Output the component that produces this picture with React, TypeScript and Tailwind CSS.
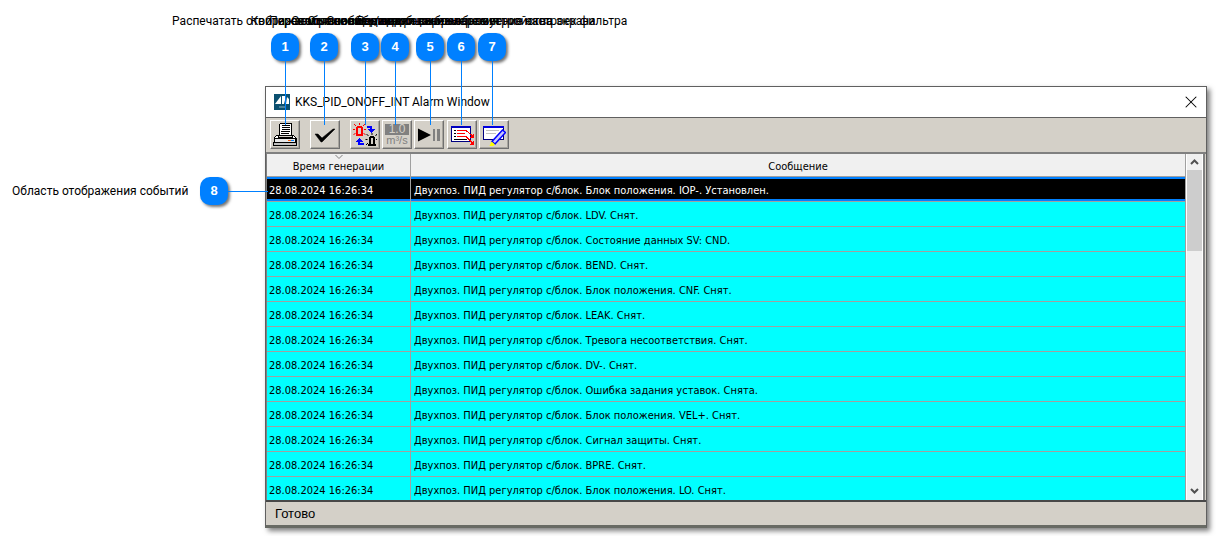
import { useState } from 'react';
import { X } from 'lucide-react';

interface AlarmEvent {
  time: string;
  message: string;
}

const PREFIX = 'Двухпоз. ПИД регулятор с/блок. ';

const EVENTS: AlarmEvent[] = [
  'Блок положения. IOP-. Установлен.',
  'LDV. Снят.',
  'Состояние данных SV: CND.',
  'BEND. Снят.',
  'Блок положения. CNF. Снят.',
  'LEAK. Снят.',
  'Тревога несоответствия. Снят.',
  'DV-. Снят.',
  'Ошибка задания уставок. Снята.',
  'Блок положения. VEL+. Снят.',
  'Сигнал защиты. Снят.',
  'BPRE. Снят.',
  'Блок положения. LO. Снят.',
].map((text) => ({ time: '28.08.2024 16:26:34', message: PREFIX + text }));

// Callouts pinned over the toolbar, one per button
const CALLOUTS = [
  { id: 1, place: 'left-[271px]', label: 'Распечатать отображаемые сообщения' },
  { id: 2, place: 'left-[310px]', label: 'Квитировать все события' },
  { id: 3, place: 'left-[351px]', label: 'Переключение состояния сирены' },
  { id: 4, place: 'left-[381px]', label: 'Отображение в единицах измерения' },
  { id: 5, place: 'left-[416px]', label: 'Остановить/возобновить обновление окна' },
  { id: 6, place: 'left-[447px]', label: 'Сообщения для выбранного устройства экрана' },
  { id: 7, place: 'left-[478px]', label: 'Редактирование параметров настроек фильтра' },
];

const BADGE =
  "flex h-7 w-7 shrink-0 items-center justify-center rounded-[10px] bg-[#0080ff] font-['Liberation_Sans',Arial,sans-serif] text-[13px] font-bold text-white shadow-[2px_2px_3px_rgba(0,0,0,0.55)]";

function PrintIcon() {
  return (
    <svg width="24" height="24" viewBox="0 0 24 24" shapeRendering="crispEdges">
      <path d="M4 12l-3 3v4h22v-4l-3-3h-1v2H5v-2z" fill="#fff" stroke="#000" />
      <path d="M7.500 0.500H18.500V12.500H6.500V2z" fill="#fff" stroke="#000" />
      <path d="M9 2.500h8M9 4.500h8M9 6.500h8M8 8.500h9M8 10.500h8" stroke="#000" />
      <rect x="1.5" y="15.500" width="21" height="4" fill="#e8e8e8" stroke="#000" />
      <rect x="0.5" y="19.500" width="23" height="3" fill="#c0c0c0" stroke="#000" />
      <rect x="15" y="17" width="3" height="1" fill="#ff6000" />
      <rect x="18" y="17" width="3" height="1" fill="#0080ff" />
    </svg>
  );
}

function AckIcon() {
  return (
    <svg width="24" height="24" viewBox="0 0 24 24">
      <path d="M2 11h3l4 4L20 6h2L9 19H8z" fill="#000" stroke="#000" strokeWidth="0.5" />
    </svg>
  );
}

function AlarmSwitchIcon() {
  return (
    <svg width="24" height="24" viewBox="0 0 24 24" fill="none">
      <g shapeRendering="crispEdges">
        <path d="M4 11V5L5 4H8L9 5V11M3 12H10" stroke="#f00" strokeWidth="2" />
        <path d="M17 21V15L18 14H20L21 15V21M15 22H23" stroke="#000" strokeWidth="2" />
      </g>
      <path d="M6.500 0V2M1 1L3 3M12 1L10 3M0 6.500H2M11 6.500H13M0.500 12L2.500 10M12.500 12L10.500 10" stroke="#f00" />
      <path d="M19 10V12M13.500 11L15.500 13M24 11L22.500 13M12.500 16.500H14.500M23 16.500H24M13 22L15 20" stroke="#000" />
      <g shapeRendering="crispEdges">
        <path d="M14 4H18V7" stroke="#00f" strokeWidth="2" />
        <path d="M14 6H22L18 10Z" fill="#00f" />
        <path d="M11 21H6V18" stroke="#00f" strokeWidth="2" />
        <path d="M2 19H10L6 15Z" fill="#00f" />
      </g>
    </svg>
  );
}

function UnitsIcon() {
  return (
    <span className="flex flex-col items-center font-['Liberation_Sans',sans-serif] text-[11px] leading-[11px] text-[#808080]">
      <span className="w-6 bg-[#808080] text-[12px] text-[#d4d0c8]">1.0</span>
      <span>m³/s</span>
    </span>
  );
}

function PauseIcon() {
  return (
    <svg width="24" height="24" viewBox="0 0 24 24">
      <path d="M1 5.500V18.500L14 12Z" fill="#000" />
      <rect x="16" y="6" width="2" height="12" fill="#808080" />
      <rect x="20" y="6" width="3" height="12" fill="#808080" />
    </svg>
  );
}

function ListIcon() {
  return (
    <svg width="24" height="24" viewBox="0 0 24 24" shapeRendering="crispEdges">
      <rect x="1" y="3" width="20" height="16" fill="#000080" />
      <rect x="2" y="5" width="18" height="13" fill="#fff" />
      <rect x="1" y="3" width="20" height="2" fill="#0000c0" />
      <path d="M4 7.500H6M4 10.500H6M4 13.500H6M4 16.500H17" stroke="#000" />
      <path d="M7 7.500H16L22 12.500M7 10.500H15M7 13.500H16L22 19.500" stroke="#f00" fill="none" />
      <path d="M24 10v5h-5zM24 17v5h-5z" fill="#f00" />
    </svg>
  );
}

function EditIcon() {
  return (
    <svg width="24" height="24" viewBox="0 0 24 24">
      <g shapeRendering="crispEdges">
        <rect x="1" y="3" width="21" height="14" fill="#000080" />
        <rect x="2" y="5" width="19" height="11" fill="#fff" />
        <rect x="1" y="3" width="21" height="2" fill="#0000e0" />
        <path d="M4 7.500H17M4 10.500H14" stroke="#c0c0c0" />
      </g>
      <path d="M20.500 7l3 2.500L13 21l-3-2.500z" fill="#c8c8ff" stroke="#00f" strokeWidth="1.5" />
      <path d="M9.500 18.500l3.500 3-2 1.500H7.500z" fill="#ff0" />
    </svg>
  );
}

const TOOLS = [
  { id: 'print', title: 'Распечатать', icon: <PrintIcon />, gap: 'mr-[10px]' },
  { id: 'ack', title: 'Квитировать', icon: <AckIcon />, gap: 'mr-[10px]' },
  { id: 'switch', title: 'Переключить', icon: <AlarmSwitchIcon />, gap: 'mr-0.5' },
  { id: 'units', title: 'Единицы', icon: <UnitsIcon />, gap: 'mr-0.5' },
  { id: 'pause', title: 'Пауза', icon: <PauseIcon />, gap: 'mr-[3px]' },
  { id: 'list', title: 'Список', icon: <ListIcon />, gap: 'mr-0.5' },
  { id: 'edit', title: 'Фильтр', icon: <EditIcon />, gap: '' },
];

function Callouts() {
  return (
    <>
      {CALLOUTS.map((c) => (
        <div key={c.id} className={`absolute top-[13px] z-10 flex w-7 flex-col items-center ${c.place}`}>
          <span className="flex h-4 w-0 justify-center text-[12px] leading-4 whitespace-nowrap">{c.label}</span>
          <span className={`mt-1 ${BADGE}`}>{c.id}</span>
          <span className="ml-px h-16 w-px bg-[#0080ff]" />
        </div>
      ))}
      <div className="absolute top-[177px] left-3 z-10 flex items-center">
        <span className="w-[188px] text-[12px] whitespace-nowrap">Область отображения событий</span>
        <span className={BADGE}>8</span>
        <span className="h-px w-10 bg-[#0080ff]" />
      </div>
    </>
  );
}

function Scrollbar() {
  return (
    <div className="flex w-[17px] shrink-0 flex-col border-x border-white bg-[#f0f0f0]">
      <button aria-label="Вверх" className="flex h-4 shrink-0 items-center justify-center">
        <svg width="9" height="6" viewBox="0 0 9 6" fill="none" stroke="#505050" strokeWidth="2">
          <path d="M1 5L4.500 1.500L8 5" />
        </svg>
      </button>
      <div className="h-[81px] bg-[#cdcdcd]" />
      <button aria-label="Вниз" className="mt-auto flex h-[18px] shrink-0 items-center justify-center">
        <svg width="9" height="6" viewBox="0 0 9 6" fill="none" stroke="#505050" strokeWidth="2">
          <path d="M1 1L4.500 4.500L8 1" />
        </svg>
      </button>
    </div>
  );
}

function EventTable() {
  const [selected, setSelected] = useState(0);

  return (
    <table className="w-full table-fixed border-separate border-spacing-0 text-[11px] leading-4 whitespace-nowrap">
      <colgroup>
        <col className="w-[144px]" />
        <col />
      </colgroup>
      <thead>
        <tr className="h-[23px] bg-[#f0f0f0]">
          <th className="border-r border-b border-[#a0a0a0] p-0 font-normal">
            <div className="flex flex-col items-center">
              <svg width="8" height="4" viewBox="0 0 8 4" fill="none" stroke="#808080" className="mt-px">
                <path d="M0.500 0L4 3.500L7.500 0" />
              </svg>
              <span className="pb-0.5 leading-[15px]">Время генерации</span>
            </div>
          </th>
          <th className="border-r border-b border-[#a0a0a0] p-0 pt-1 font-normal">Сообщение</th>
        </tr>
      </thead>
      <tbody>
        {EVENTS.map((e, i) => {
          const active = i === selected;
          const row = active
            ? 'bg-black text-white shadow-[inset_0_2px_#0080ff,inset_0_-2px_#0080ff]'
            : 'bg-[#00ffff] text-black';
          return (
            <tr key={i} className="h-[25px]" onClick={() => setSelected(i)}>
              <td className={`border-r border-b border-[#a0a0a0] p-0 pt-1 pl-0.5 ${row}`}>{e.time}</td>
              <td className={`border-r border-b border-[#a0a0a0] p-0 pt-1 pl-[3px] ${row}`}>{e.message}</td>
            </tr>
          );
        })}
      </tbody>
    </table>
  );
}

function AlarmWindow() {
  return (
    <div className="border border-b-[3px] border-[#606060] border-b-[#686a64] bg-[#d4d0c8] font-['DejaVu_Sans_Condensed','DejaVu_Sans',sans-serif] shadow-[3px_3px_5px_rgba(0,0,0,0.5)]">
      <div className="flex h-[30px] items-center bg-white pr-[5px] pl-2">
        <svg width="16" height="16" viewBox="0 0 16 16">
          <rect width="16" height="16" fill="#0b5070" />
          <path d="M1 10L7 2V10ZM8 2H12L10 10H8ZM13 3L15 5V10H12Z" fill="#fff" />
          <path d="M5 13H12" stroke="#8fb4c4" />
        </svg>
        <h1 className="ml-[5px] font-[Roboto,'Open_Sans',sans-serif] text-[12px]">KKS_PID_ONOFF_INT Alarm Window</h1>
        <button aria-label="Закрыть" className="ml-auto">
          <X size={20} strokeWidth={1.25} />
        </button>
      </div>

      <div className="flex border-t border-b-2 border-t-[#606060] border-b-[#808080] pt-0.5 pb-[3px] pl-1">
        {TOOLS.map((t) => (
          <button
            key={t.id}
            aria-label={t.title}
            className={`flex h-[29px] w-[30px] shrink-0 items-center justify-center border border-t-white border-r-[#707070] border-b-[#707070] border-l-white shadow-[inset_-1px_-1px_#a8a59e] ${t.gap}`}
          >
            {t.icon}
          </button>
        ))}
      </div>

      <div className="flex h-[346px] overflow-hidden border-r border-l border-r-[#d4d0c8] border-l-[#808080]">
        <div className="min-w-0 flex-1">
          <EventTable />
        </div>
        <Scrollbar />
        <div className="w-0.5 bg-[#808080]" />
      </div>

      <div className="border-t-2 border-[#484848] pl-[9px] font-['Liberation_Sans',Arial,sans-serif] text-[13px] leading-[23px]">
        Готово
      </div>
    </div>
  );
}

export default function App() {
  return (
    <main className="relative bg-white pt-[86px] pr-[9px] pb-2 pl-[265px] font-[Roboto,'Liberation_Sans',sans-serif] text-black">
      <Callouts />
      <AlarmWindow />
    </main>
  );
}
